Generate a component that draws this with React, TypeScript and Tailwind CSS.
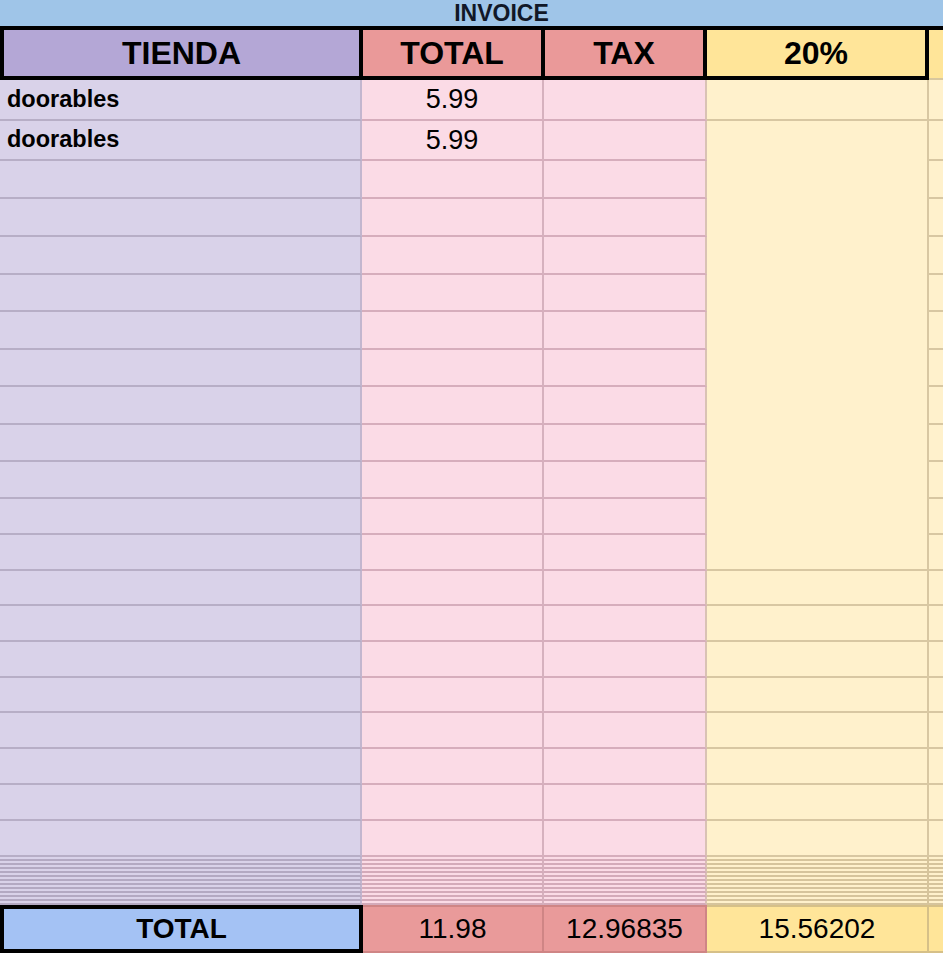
import React from 'react';

type Row = { h: string; tienda?: string; total?: string };

// heights include the 2px bottom grid line
const rows: Row[] = [
  { h: 'h-[41px]', tienda: 'doorables', total: '5.99' },
  { h: 'h-[40px]', tienda: 'doorables', total: '5.99' },
  { h: 'h-[38px]' },
  { h: 'h-[38px]' },
  { h: 'h-[38px]' },
  { h: 'h-[37px]' },
  { h: 'h-[38px]' },
  { h: 'h-[37px]' },
  { h: 'h-[38px]' },
  { h: 'h-[37px]' },
  { h: 'h-[37px]' },
  { h: 'h-[36px]' },
  { h: 'h-[36px]' },
  { h: 'h-[35px]' },
  { h: 'h-[36px]' },
  { h: 'h-[36px]' },
  { h: 'h-[35px]' },
  { h: 'h-[36px]' },
  { h: 'h-[36px]' },
  { h: 'h-[36px]' },
  { h: 'h-[36px]' },
];

const hidden = Array.from({ length: 12 }, (_, i) => i);

const font = "font-['Liberation_Sans',Arial,sans-serif]";

export default function App() {
  return (
    <div className={`w-[943px] h-[954px] overflow-hidden bg-white text-black ${font}`}>
      {/* banner */}
      <div className="h-[26px] bg-[#9fc5e8] flex items-center justify-center pl-[60px]">
        <span className="text-[23px] font-bold leading-[22px] text-[#111827]">INVOICE</span>
      </div>

      {/* header */}
      <div className="flex h-[54px] border-t-4 border-black">
        <div className="w-[363px] shrink-0 bg-[#b4a7d6] border-l-4 border-r-4 border-b-4 border-black flex items-center justify-center text-[32px] font-bold">
          TIENDA
        </div>
        <div className="w-[182px] shrink-0 bg-[#ea9999] border-r-4 border-b-4 border-black flex items-center justify-center text-[32px] font-bold">
          TOTAL
        </div>
        <div className="w-[162px] shrink-0 bg-[#ea9999] border-r-4 border-b-4 border-black flex items-center justify-center text-[32px] font-bold">
          TAX
        </div>
        <div className="w-[222px] shrink-0 bg-[#ffe599] border-r-4 border-b-4 border-black flex items-center justify-center text-[32px] font-bold">
          20%
        </div>
        <div className="flex-1 bg-[#ffe599] border-b-2 border-[#d8c79e]" />
      </div>

      {/* body */}
      <div className="grid grid-cols-[362px_182px_163px_222px_1fr]">
        {rows.map((r, i) => (
          <React.Fragment key={i}>
            <div className={`${r.h} bg-[#d9d2e9] border-r-2 border-b-2 border-r-[#c3b6cf] border-b-[#b7aec6] flex items-center pl-[7px] text-[23.5px] font-bold`}>
              {r.tienda}
            </div>
            <div className={`${r.h} bg-[#fbdbe6] border-r-2 border-b-2 border-r-[#d6b1be] border-b-[#d6adbc] flex items-center justify-center text-[27px]`}>
              {r.total}
            </div>
            <div className={`${r.h} bg-[#fbdbe6] border-r-2 border-b-2 border-r-[#d9c2b4] border-b-[#d6adbc]`} />
            {i === 0 && <div className="bg-[#fff1cc] border-r-2 border-b-2 border-[#d8c7a2]" />}
            {i === 1 && <div className="row-span-12 bg-[#fff1cc] border-r-2 border-b-2 border-[#d8c7a2]" />}
            {(i > 12) && <div className="bg-[#fff1cc] border-r-2 border-b-2 border-[#d8c7a2]" />}
            <div className="bg-[#fff1cc] border-b-2 border-[#d8c7a2]" />
          </React.Fragment>
        ))}
        {hidden.map((i) => (
          <React.Fragment key={`h${i}`}>
            <div className="h-[4px] bg-[#d9d2e9] border-r-2 border-b-2 border-r-[#c3b6cf] border-b-[#b3a9c2]" />
            <div className="h-[4px] bg-[#fbdbe6] border-r-2 border-b-2 border-r-[#d6b1be] border-b-[#d4aab9]" />
            <div className="h-[4px] bg-[#fbdbe6] border-r-2 border-b-2 border-r-[#d9c2b4] border-b-[#d4aab9]" />
            <div className="h-[4px] bg-[#fff1cc] border-r-2 border-b-2 border-[#d6c49c]" />
            <div className="h-[4px] bg-[#fff1cc] border-b-2 border-[#d6c49c]" />
          </React.Fragment>
        ))}
      </div>

      {/* totals */}
      <div className="flex h-[48px]">
        <div className="w-[363px] shrink-0 bg-[#a4c2f4] border-4 border-black flex items-center justify-center text-[28px] font-bold">
          TOTAL
        </div>
        <div className="w-[181px] shrink-0 bg-[#e99a9a] border-t-2 border-b-2 border-r-2 border-[#cf8585] flex items-center justify-center text-[28px]">
          11.98
        </div>
        <div className="w-[163px] shrink-0 bg-[#e99a9a] border-t-2 border-b-2 border-r-2 border-[#cf8585] flex items-center justify-center text-[28px]">
          12.96835
        </div>
        <div className="w-[222px] shrink-0 bg-[#ffe599] border-t-2 border-b-2 border-r-2 border-[#d6c088] flex items-center justify-center text-[28px]">
          15.56202
        </div>
        <div className="flex-1 bg-[#ffe599] border-t-2 border-b-2 border-[#d6c088]" />
      </div>
    </div>
  );
}
